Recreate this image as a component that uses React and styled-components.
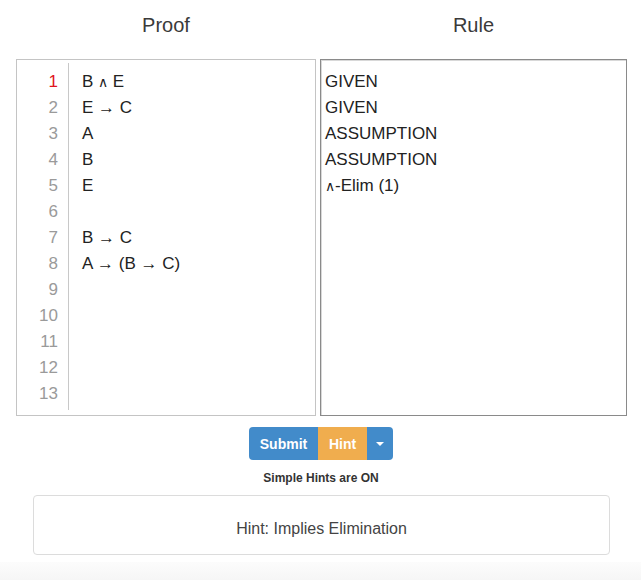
import React from 'react';
import styled, { createGlobalStyle } from 'styled-components';

const GlobalStyle = createGlobalStyle`
  body {
    margin: 0;
    background: #fff;
    font-family: "Liberation Sans", Arial, sans-serif;
    color: #222;
  }
`;

const Page = styled.div`
  width: 641px;
  min-height: 580px;
  display: flex;
  flex-direction: column;
`;

const Columns = styled.div`
  display: grid;
  grid-template-columns: 300px 307px;
  column-gap: 4px;
  padding-left: 16px;
`;

const Heading = styled.div`
  height: 59px;
  display: flex;
  align-items: flex-start;
  justify-content: center;
  padding-top: 14px;
  box-sizing: border-box;
  font-size: 20px;
  font-weight: 300;
  color: #3a3a3a;
`;

const ProofBox = styled.div`
  height: 357px;
  box-sizing: border-box;
  border: 1px solid #c4c4c4;
  display: flex;
  padding: 3px 0 5px;
`;

const Gutter = styled.div`
  width: 52px;
  box-sizing: border-box;
  padding: 6px 10px 0 0;
  border-right: 1px solid #c8c8c8;
  text-align: right;
`;

const LineNo = styled.div`
  height: 26px;
  line-height: 26px;
  font-size: 17px;
  color: ${p => (p.active ? '#e0141e' : '#9a9a9a')};
`;

const Lines = styled.div`
  padding: 6px 0 0 13px;
`;

const Line = styled.div`
  height: 26px;
  line-height: 26px;
  font-size: 17px;
  color: #222;
  white-space: pre;
`;

const And = styled.span`
  font-size: 14px;
`;

const RuleBox = styled.div`
  height: 357px;
  box-sizing: border-box;
  border: 1px solid #8a8a8a;
  box-shadow: inset 1px 1px 0 #d8d8d8;
  padding: 9px 0 0 4px;
`;

const Controls = styled.div`
  display: flex;
  flex-direction: column;
  align-items: center;
  padding-top: 11px;
  padding-left: 1px;
`;

const ButtonGroup = styled.div`
  display: flex;
  border-radius: 4px;
  overflow: hidden;
`;

const Btn = styled.button`
  height: 33px;
  width: ${p => p.w}px;
  border: none;
  margin: 0;
  padding: 0;
  background: ${p => (p.warn ? '#f0ad4e' : '#428bca')};
  color: #fff;
  font-family: "Liberation Sans", Arial, sans-serif;
  font-size: 14px;
  font-weight: bold;
  display: flex;
  align-items: center;
  justify-content: center;
`;

const Caret = styled.span`
  width: 0;
  height: 0;
  border-left: 4px solid transparent;
  border-right: 4px solid transparent;
  border-top: 4px solid #fff;
`;

const Status = styled.div`
  margin-top: 11px;
  font-size: 12px;
  font-weight: bold;
  color: #333;
`;

const HintCard = styled.div`
  margin: 10px 31px 0 33px;
  height: 60px;
  box-sizing: border-box;
  border: 1px solid #dcdcdc;
  border-radius: 4px;
  display: flex;
  align-items: center;
  justify-content: center;
  padding-top: 7px;
  font-size: 16px;
  color: #444;
`;

const Footer = styled.div`
  margin-top: 7px;
  flex: 1;
  background: linear-gradient(#fcfcfc, #f6f6f6);
`;

const withAnd = s =>
  s.split('∧').flatMap((part, i) => (i === 0 ? [part] : [<And key={i}>∧</And>, part]));

const proof = ['B ∧ E', 'E → C', 'A', 'B', 'E', '', 'B → C', 'A → (B → C)', '', '', '', '', ''];
const rules = ['GIVEN', 'GIVEN', 'ASSUMPTION', 'ASSUMPTION', '∧-Elim (1)'];

function App() {
  return (
    <Page>
      <GlobalStyle />
      <Columns>
        <Heading>Proof</Heading>
        <Heading>Rule</Heading>
        <ProofBox>
          <Gutter>
            {proof.map((_, i) => (
              <LineNo key={i} active={i === 0}>{i + 1}</LineNo>
            ))}
          </Gutter>
          <Lines>
            {proof.map((l, i) => (
              <Line key={i}>{withAnd(l)}</Line>
            ))}
          </Lines>
        </ProofBox>
        <RuleBox>
          {rules.map((r, i) => (
            <Line key={i}>{withAnd(r)}</Line>
          ))}
        </RuleBox>
      </Columns>
      <Controls>
        <ButtonGroup>
          <Btn w={69}>Submit</Btn>
          <Btn w={49} warn>Hint</Btn>
          <Btn w={26}><Caret /></Btn>
        </ButtonGroup>
        <Status>Simple Hints are ON</Status>
      </Controls>
      <HintCard>Hint: Implies Elimination</HintCard>
      <Footer />
    </Page>
  );
}

export default App;
